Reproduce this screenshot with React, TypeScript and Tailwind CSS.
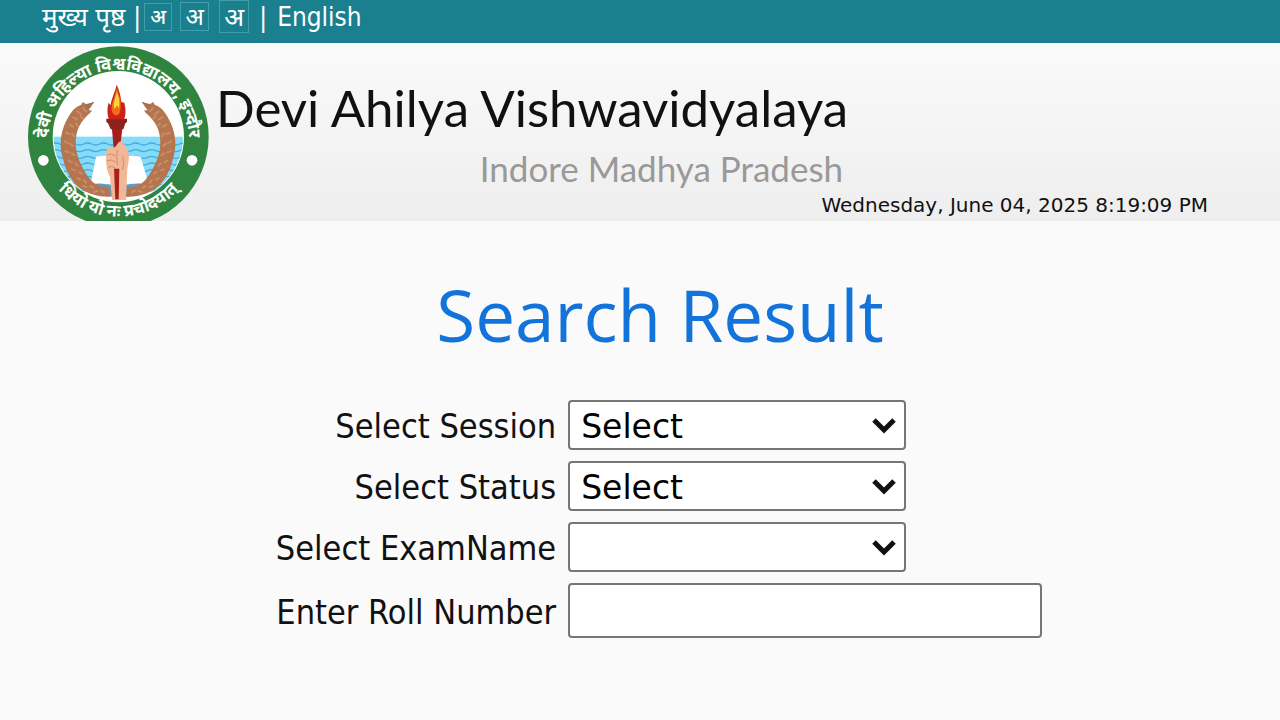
import { useState } from 'react';

const sessions = ['Select'];
const statuses = ['Select'];
const examNames = [''];

function Wreath() {
    return (
        <g>
            <path
                d="M222 187 L198 192 L188 186 L184 194 C160 200 142 232 132 258 C120 290 118 325 130 360 C138 395 156 425 180 445 C208 464 240 472 272 470 L266 444 C240 442 220 432 205 412 C188 386 172 356 168 325 C164 290 172 262 190 240 C200 226 208 222 216 212 L206 210 Z"
                fill="#b5754f"
            />
            <path
                d="M190 204 l8 10 M172 214 l10 8 M160 232 l12 6 M182 228 l6 8 M150 254 l9 6 M168 250 l6 8 M138 278 l10 4 M156 280 l6 9 M134 304 l9 5 M150 310 l8 8 M136 334 l10 3 M156 340 l8 6 M146 362 l9 5 M166 370 l7 7 M156 388 l10 3 M178 396 l8 5 M172 414 l8 5 M192 420 l6 8 M190 438 l9 3 M212 438 l8 6 M222 456 l10 -3 M244 452 l8 5"
                stroke="#c98e69"
                strokeWidth="6"
                strokeLinecap="round"
            />
            <path d="M222 187 L196 198 M214 198 L196 206" stroke="#8f6a55" strokeWidth="3" />
        </g>
    );
}

function Logo() {
    return (
        <svg viewBox="21 18 546 525" role="img" aria-label="Devi Ahilya Vishwavidyalaya" className="h-[175px] w-[182px] shrink-0">
            <defs>
                <clipPath id="inner">
                    <circle cx="295" cy="290" r="194" />
                </clipPath>
                <path id="topArc" d="M85 330 A212 212 0 1 1 505 330" />
                <path id="bottomArc" d="M55 290 A240 240 0 0 0 535 290" />
            </defs>
            <circle cx="295" cy="290" r="271" fill="#2f8540" />
            <circle cx="295" cy="290" r="197" fill="#ffffff" />

            {/* water */}
            <g clipPath="url(#inner)">
                <rect x="90" y="290" width="410" height="165" fill="#85dbf8" />
                {[312, 332, 352, 372, 392, 412, 432, 450].map((y) => (
                    <path
                        key={y}
                        d={`M95 ${y} q12 -6 24 0 t24 0 t24 0 t24 0 t24 0 t24 0 t24 0 t24 0 t24 0 t24 0 t24 0 t24 0 t24 0 t24 0 t24 0 t24 0 t24 0`}
                        fill="none"
                        stroke="#43abdc"
                        strokeWidth="4"
                    />
                ))}
            </g>

            {/* book */}
            <path d="M228 350 Q262 342 293 356 Q325 342 362 350 L386 432 Q335 426 295 440 Q255 426 212 432 Z" fill="#ffffff" />
            <path d="M208 434 Q252 426 295 444 Q340 426 388 434 L370 462 L300 474 L230 462 Z" fill="#6d93b5" />

            {/* the right branch mirrors the left one */}
            <Wreath />
            <g transform="translate(588 0) scale(-1 1)">
                <Wreath />
            </g>

            {/* torch */}
            <path d="M275 258 L308 258 L300 325 L281 325 Z" fill="#a31e1b" />
            <path d="M259 236 H321 V246 L316 250 L310 268 H272 L264 250 L259 246 Z" fill="#8f211c" />
            <path d="M266 238 C262 222 260 206 266 188 L272 196 C274 176 284 160 290 134 C298 152 302 166 304 186 L313 188 C318 210 318 224 312 238 Z" fill="#c9231a" />
            <path d="M276 216 C270 194 284 176 290 144 C300 168 306 190 300 216 C294 230 284 230 276 216 Z" fill="#f26a1b" />
            <path d="M283 206 C278 188 288 174 290 156 C297 172 301 188 296 206 C293 196 290 194 288 202 Z" fill="#ffd633" />
            <path d="M262 322 C270 318 276 324 284 322 C290 318 294 306 302 304 C310 304 312 312 318 322 C330 336 328 360 322 386 L318 480 L276 480 L270 410 C256 386 256 350 262 322 Z" fill="#f0b896" />
            <path d="M262 344 Q274 338 286 348 M261 362 Q274 356 286 366 M264 382 Q276 376 286 384 M292 330 Q288 350 292 376 M308 350 Q314 370 308 390" fill="none" stroke="#d18b69" strokeWidth="3" />
            <path d="M282 386 H298 L296 478 H286 Z" fill="#a8201c" />

            <circle cx="70" cy="361" r="16" fill="#ffffff" />
            <circle cx="516" cy="361" r="16" fill="#ffffff" />
            <g fill="#ffffff" fontFamily="'Noto Sans Devanagari', 'Noto Sans', sans-serif" fontWeight="700" textAnchor="middle">
                <text fontSize="51">
                    <textPath href="#topArc" startOffset="50%">देवी अहिल्या विश्वविद्यालय, इन्दौर</textPath>
                </text>
                <text fontSize="50">
                    <textPath href="#bottomArc" startOffset="50%">धियो यो नः प्रचोदयात्</textPath>
                </text>
            </g>
        </svg>
    );
}

interface SelectFieldProps {
    id: string;
    label: string;
    options: string[];
}

function SelectField({ id, label, options }: SelectFieldProps) {
    const [value, setValue] = useState(options[0]);

    return (
        <>
            <label htmlFor={id} className="pt-[2px] text-right">
                {label}
            </label>
            <div className="relative w-[338px]">
                <select
                    id={id}
                    value={value}
                    onChange={(e) => setValue(e.target.value)}
                    className="h-[50px] w-full appearance-none rounded-[4px] border-2 border-[#767676] bg-white pl-[11px] pr-12 pt-1 font-['DejaVu_Sans',sans-serif] text-[33px] leading-[42px] text-black"
                >
                    {options.map((option) => (
                        <option key={option} value={option}>
                            {option}
                        </option>
                    ))}
                </select>
                <svg viewBox="0 0 24 16" className="pointer-events-none absolute right-[10px] top-[18px] h-4 w-6">
                    <path d="M2 2 L12 12 L22 2" fill="none" stroke="#111" strokeWidth="5" />
                </svg>
            </div>
        </>
    );
}

export default function App() {
    const [rollNumber, setRollNumber] = useState('');

    return (
        <div className="min-h-screen bg-[#fafafa] font-['DejaVu_Sans_Condensed','Noto_Sans_Devanagari',sans-serif] text-[#111]">
            <nav className="flex h-[43px] items-start bg-[#1a7f8e] pl-[42px] text-[26px] leading-[34px] text-white">
                <a href="#home">मुख्य पृष्ठ</a>
                <span className="ml-2">|</span>
                <button type="button" className="ml-[3px] mt-[3px] h-7 w-7 border border-[#3fa0ac] text-[20px] leading-6 font-medium">
                    अ
                </button>
                <button type="button" className="ml-2 mt-[2px] h-[29px] w-[29px] border border-[#3fa0ac] text-[24px] leading-7">
                    अ
                </button>
                <button type="button" className="ml-[10px] h-[33px] w-[30px] border border-[#3fa0ac] text-[26px] leading-7">
                    अ
                </button>
                <span className="ml-[10px]">|</span>
                <a href="#english" className="ml-[10px]">
                    English
                </a>
            </nav>

            <header className="flex h-[178px] items-end bg-linear-to-b from-[#fafafa] to-[#eeeeee] pl-[27px] pr-[72px]">
                <Logo />
                <div className="flex grow flex-col pl-[7px]">
                    <div className="flex flex-col self-start text-right font-['Lato',sans-serif]">
                        <h1 className="text-[51px] leading-[78px] text-[#111]">Devi Ahilya Vishwavidyalaya</h1>
                        <p className="pr-[5px] text-[35px] leading-[42px] text-[#999]">Indore Madhya Pradesh</p>
                    </div>
                    <time dateTime="2025-06-04T20:19:09" className="self-end font-['DejaVu_Sans',sans-serif] text-[20px] leading-8">
                        Wednesday, June 04, 2025 8:19:09 PM
                    </time>
                </div>
            </header>

            <main className="flex flex-col items-center pl-[38px] pt-[50px]">
                <h2 className="pl-[2px] font-['Open_Sans',sans-serif] text-[71px] leading-[88px] text-[#1273db]">Search Result</h2>
                <form onSubmit={(e) => e.preventDefault()} className="mt-[41px] grid grid-cols-[auto_auto] items-center gap-x-3 gap-y-[11px] text-[34px] leading-[44px]">
                    <SelectField id="session" label="Select Session" options={sessions} />
                    <SelectField id="status" label="Select Status" options={statuses} />
                    <SelectField id="examName" label="Select ExamName" options={examNames} />
                    <label htmlFor="rollNumber" className="pt-[2px] text-right">
                        Enter Roll Number
                    </label>
                    <input
                        id="rollNumber"
                        type="text"
                        value={rollNumber}
                        onChange={(e) => setRollNumber(e.target.value)}
                        className="h-[55px] w-[474px] rounded-[4px] border-2 border-[#767676] bg-white px-3"
                    />
                </form>
            </main>
        </div>
    );
}
